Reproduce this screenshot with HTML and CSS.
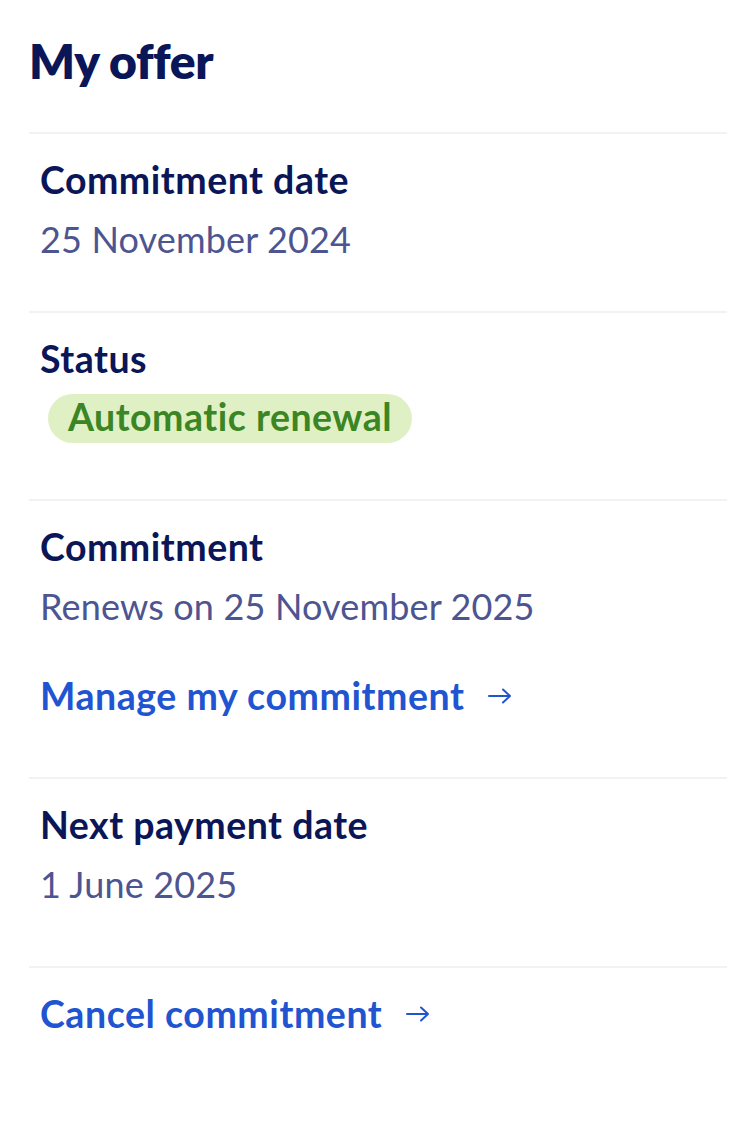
FILE: index.html
```html
<!DOCTYPE html>
<html lang="en">
<head>
<meta charset="utf-8">
<title>My offer</title>
<link rel="stylesheet" href="styles.css">
</head>
<body>
<main class="offer">
  <h1 class="title">My offer</h1>

  <section class="item item-date">
    <div class="label">Commitment date</div>
    <div class="value">25 November 2024</div>
  </section>

  <section class="item item-status">
    <div class="label">Status</div>
    <span class="badge">Automatic renewal</span>
  </section>

  <section class="item item-commit">
    <div class="label">Commitment</div>
    <div class="value">Renews on 25 November 2025</div>
    <a class="link link-manage" href="#">Manage my commitment
      <svg class="arrow" width="24" height="16" viewBox="0 0 24 16" aria-hidden="true"><path d="M1 8H22M15 1.5L22 8L15 14.5" fill="none" stroke="currentColor" stroke-width="2" stroke-linecap="round" stroke-linejoin="round"/></svg>
    </a>
  </section>

  <section class="item item-payment">
    <div class="label">Next payment date</div>
    <div class="value">1 June 2025</div>
  </section>

  <section class="item item-cancel">
    <a class="link" href="#">Cancel commitment
      <svg class="arrow" width="24" height="16" viewBox="0 0 24 16" aria-hidden="true"><path d="M1 8H22M15 1.5L22 8L15 14.5" fill="none" stroke="currentColor" stroke-width="2" stroke-linecap="round" stroke-linejoin="round"/></svg>
    </a>
  </section>
</main>
</body>
</html>
```

FILE: styles.css
```css
html, body {
  margin: 0;
  padding: 0;
  background: #ffffff;
}

body {
  font-family: Lato, "Liberation Sans", sans-serif;
  color: #0a1657;
}

.offer {
  width: 698px;
  margin-left: 29px;
}

.title {
  margin: 32px 0 42px 0;
  font-size: 48px;
  line-height: 58px;
  font-weight: 800;
  color: #0a1657;
  letter-spacing: -0.4px;
}

.item {
  border-top: 2px solid #f2f2f2;
  padding: 22px 11px 48px;
}

.label {
  font-size: 37.5px;
  line-height: 48px;
  font-weight: 700;
  color: #0a1657;
  letter-spacing: 0.5px;
}

.value {
  margin-top: 11px;
  font-size: 36px;
  line-height: 48px;
  font-weight: 400;
  color: #4d5591;
  letter-spacing: 0.15px;
}

.item-status {
  padding-bottom: 56px;
}

.badge {
  display: block;
  width: max-content;
  margin: 11px 0 0 8px;
  padding: 0 20px 4px;
  border-radius: 25px;
  background: #dff1c4;
  color: #3b8524;
  font-size: 37.5px;
  line-height: 45px;
  font-weight: 700;
  letter-spacing: 0.5px;
}

.item-commit {
  padding-bottom: 57px;
}

.item-payment {
  padding-bottom: 58px;
}

.link {
  display: flex;
  width: max-content;
  align-items: center;
  gap: 24px;
  font-size: 37.5px;
  line-height: 48px;
  font-weight: 700;
  color: #2154d1;
  text-decoration: none;
  letter-spacing: 0.55px;
}

.link-manage {
  margin-top: 42px;
}

.arrow {
  flex: none;
}
```
